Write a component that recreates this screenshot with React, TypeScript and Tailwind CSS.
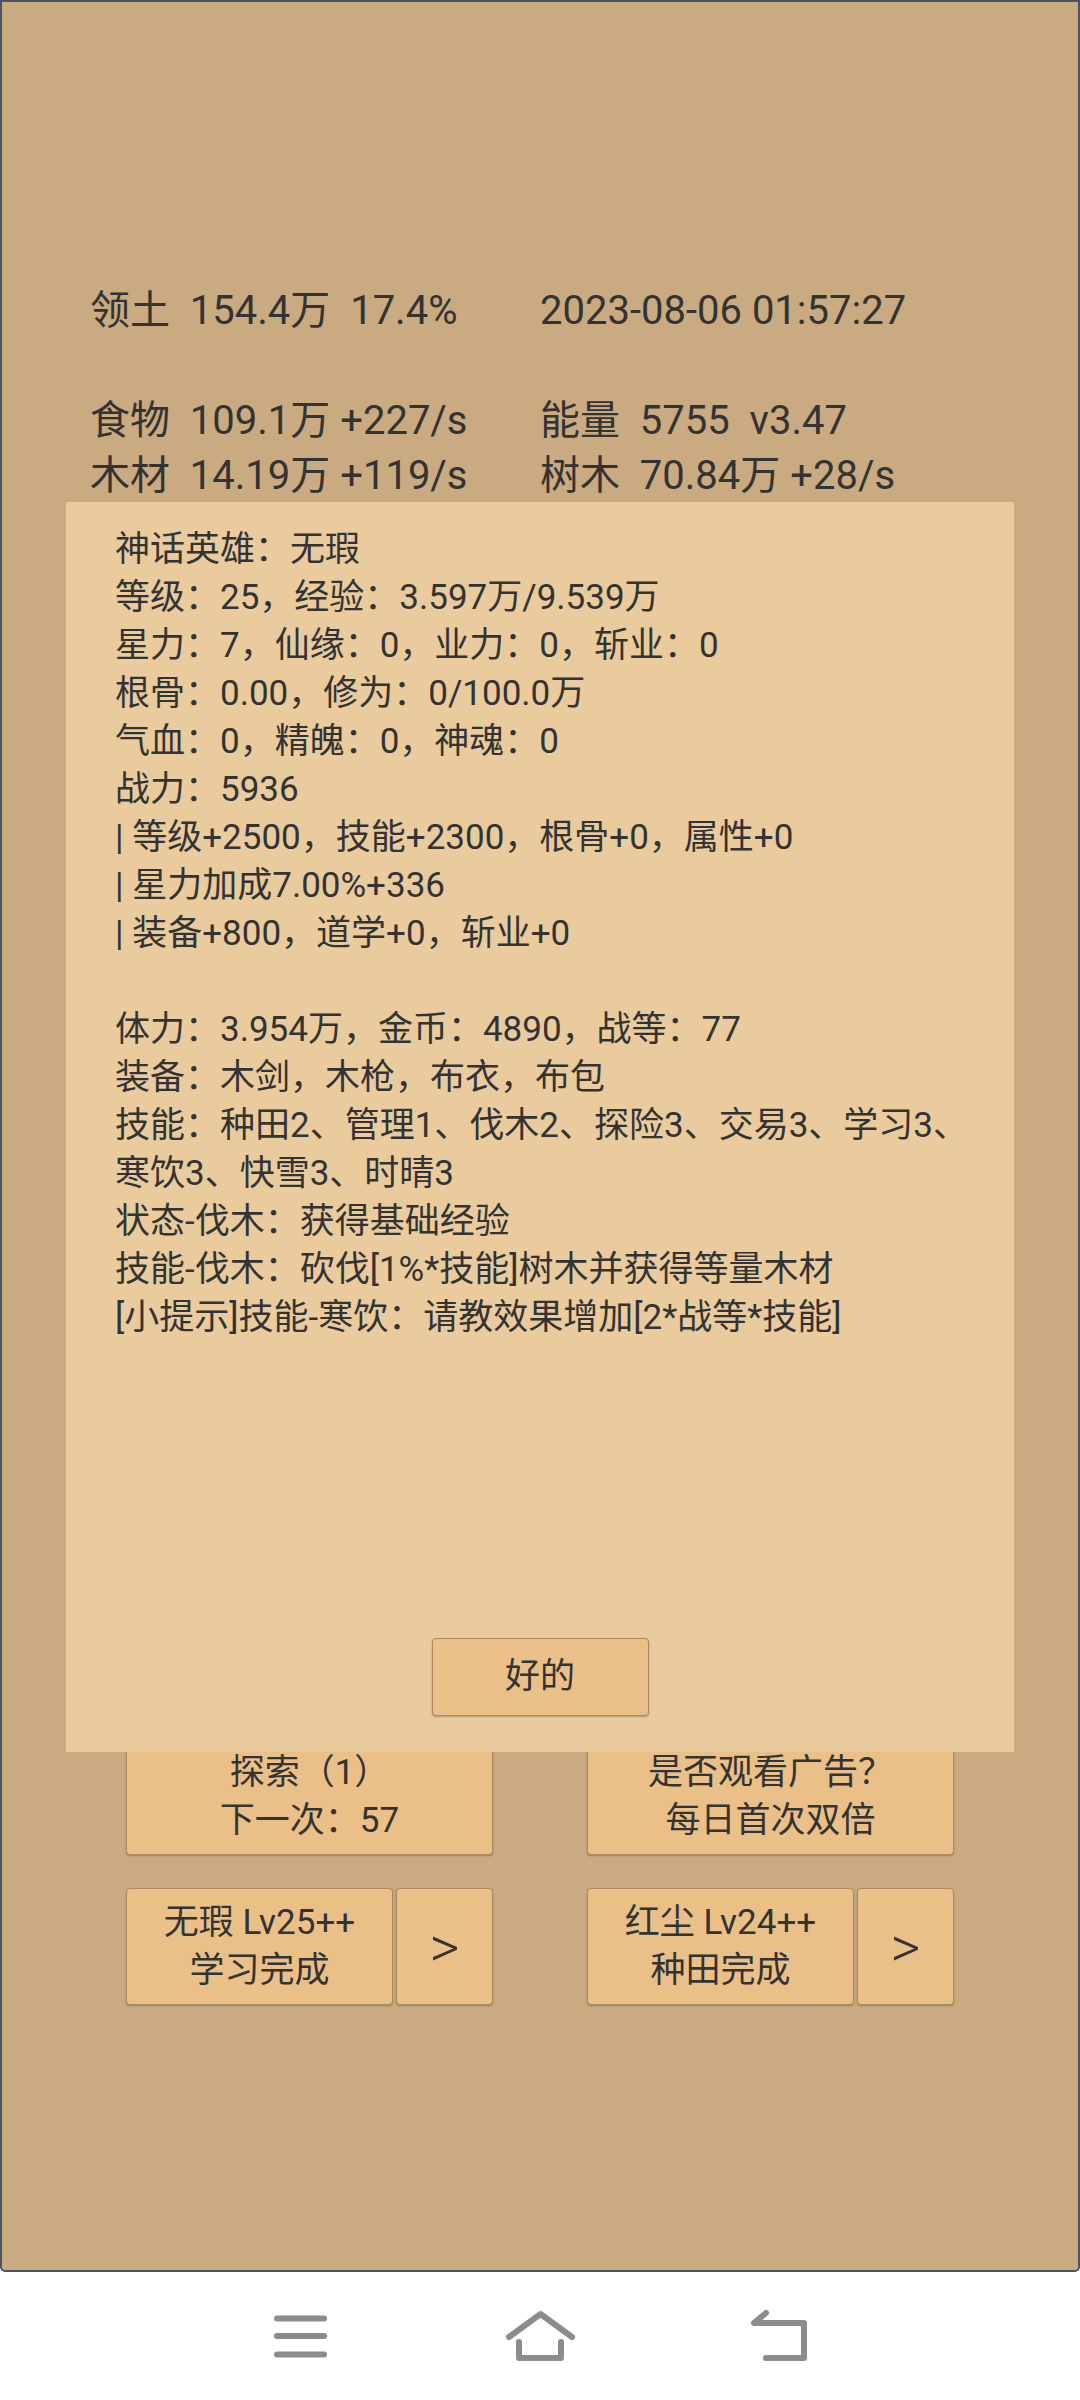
import React from "react";

const FONT = "font-['Roboto','Noto_Sans_CJK_SC',sans-serif]";

function Btn({ children, className = "" }: { children: React.ReactNode; className?: string }) {
  return (
    <div
      className={
        "flex flex-col items-center justify-center rounded-[4px] border border-[#a98a62] bg-[#eac088] leading-[48px] text-[#333] shadow-[0_1px_2px_rgba(0,0,0,0.25)] whitespace-pre " +
        className
      }
    >
      {children}
    </div>
  );
}

function MenuIcon() {
  return (
    <svg width="60" height="50" viewBox="270 2312 60 50" fill="none">
      <g stroke="#8c8c8c" strokeWidth="6" strokeLinecap="round">
        <line x1="277" y1="2319.5" x2="324" y2="2319.5" />
        <line x1="277" y1="2337" x2="324" y2="2337" />
        <line x1="277" y1="2355.5" x2="324" y2="2355.5" />
      </g>
    </svg>
  );
}

function HomeIcon() {
  return (
    <svg width="80" height="60" viewBox="500 2303 80 60" fill="none">
      <g stroke="#8c8c8c" strokeWidth="6" strokeLinecap="round" strokeLinejoin="round">
        <polyline points="509,2334 540.5,2311 572,2334" />
        <path d="M519 2339 V2355 H561 V2339" />
      </g>
    </svg>
  );
}

function BackIcon() {
  return (
    <svg width="70" height="60" viewBox="745 2303 70 60" fill="none">
      <g stroke="#8c8c8c" strokeWidth="6" strokeLinecap="round" strokeLinejoin="round">
        <path d="M766 2310 L754 2320 H804 V2355 H766" />
      </g>
    </svg>
  );
}

const dialogLines = [
  "神话英雄：无瑕",
  "等级：25，经验：3.597万/9.539万",
  "星力：7，仙缘：0，业力：0，斩业：0",
  "根骨：0.00，修为：0/100.0万",
  "气血：0，精魄：0，神魂：0",
  "战力：5936",
  "| 等级+2500，技能+2300，根骨+0，属性+0",
  "| 星力加成7.00%+336",
  "| 装备+800，道学+0，斩业+0",
  " ",
  "体力：3.954万，金币：4890，战等：77",
  "装备：木剑，木枪，布衣，布包",
  "技能：种田2、管理1、伐木2、探险3、交易3、学习3、",
  "寒饮3、快雪3、时晴3",
  "状态-伐木：获得基础经验",
  "技能-伐木：砍伐[1%*技能]树木并获得等量木材",
  "[小提示]技能-寒饮：请教效果增加[2*战等*技能]",
];

export default function App() {
  return (
    <div className={"flex h-[2400px] w-[1080px] flex-col bg-white " + FONT}>
      <div className="relative h-[2272px] w-[1080px] rounded-b-[5px] border-2 border-[#4b5466] bg-[#caaa81] text-[#333]">
        <div className="grid grid-cols-2 px-[88px] pt-[281px] text-[40px] leading-[55px] whitespace-pre">
          <div>领土  154.4万  17.4%</div>
          <div>2023-08-06 01:57:27</div>
          <div> </div>
          <div> </div>
          <div>食物  109.1万 +227/s</div>
          <div>能量  5755  v3.47</div>
          <div>木材  14.19万 +119/s</div>
          <div>树木  70.84万 +28/s</div>
        </div>

        <div className="mx-auto mt-[1235px] grid w-[828px] grid-cols-2 gap-x-[94px] gap-y-[33px] text-[35px]">
          <Btn className="h-[117px]">
            <div>探索（1）</div>
            <div>下一次：57</div>
          </Btn>
          <Btn className="h-[117px]">
            <div>是否观看广告？</div>
            <div>每日首次双倍</div>
          </Btn>
          <div className="flex h-[117px] gap-[3px]">
            <Btn className="flex-1">
              <div>无瑕 Lv25++</div>
              <div>学习完成</div>
            </Btn>
            <Btn className="w-[97px] text-[58px] font-light">
              <div>&gt;</div>
            </Btn>
          </div>
          <div className="flex h-[117px] gap-[3px]">
            <Btn className="flex-1">
              <div>红尘 Lv24++</div>
              <div>种田完成</div>
            </Btn>
            <Btn className="w-[97px] text-[58px] font-light">
              <div>&gt;</div>
            </Btn>
          </div>
        </div>

        <div className="absolute left-[64px] top-[500px] flex h-[1250px] w-[948px] flex-col bg-[#e9cb9e] pt-[24px] pb-[36px]">
          <div className="pl-[49px] text-[35px] leading-[48px] whitespace-pre">
            {dialogLines.map((l, i) => (
              <div key={i}>{l}</div>
            ))}
          </div>
          <div className="mt-auto flex justify-center">
            <Btn className="h-[78px] w-[217px] text-[35px]">
              <div>好的</div>
            </Btn>
          </div>
        </div>
      </div>

      <div className="flex h-[128px] items-center justify-center">
        <div className="flex w-[240px] justify-center"><MenuIcon /></div>
        <div className="flex w-[240px] justify-center"><HomeIcon /></div>
        <div className="flex w-[240px] justify-center"><BackIcon /></div>
      </div>
    </div>
  );
}
